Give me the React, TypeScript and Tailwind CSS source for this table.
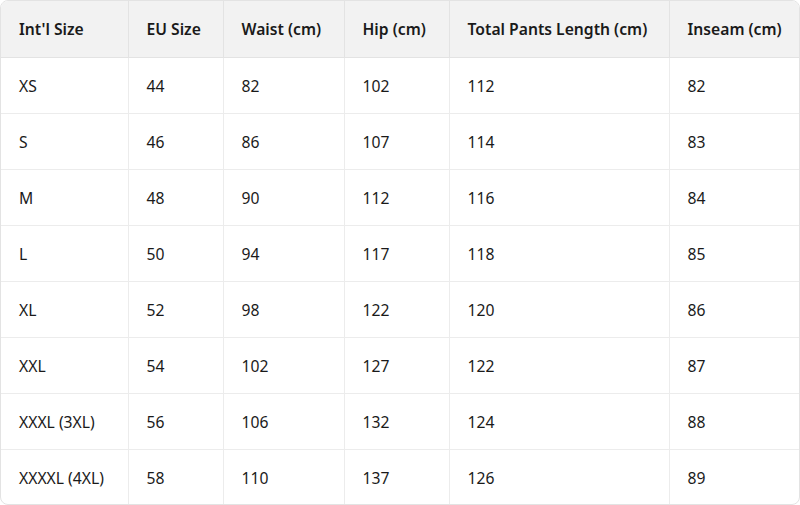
import React from "react";

const headers = ["Int'l Size", "EU Size", "Waist (cm)", "Hip (cm)", "Total Pants Length (cm)", "Inseam (cm)"];
const widths = ["w-[127px]", "w-[95px]", "w-[121px]", "w-[105px]", "w-[220px]", "w-[130px]"];
const rows = [
  ["XS", "44", "82", "102", "112", "82"],
  ["S", "46", "86", "107", "114", "83"],
  ["M", "48", "90", "112", "116", "84"],
  ["L", "50", "94", "117", "118", "85"],
  ["XL", "52", "98", "122", "120", "86"],
  ["XXL", "54", "102", "127", "122", "87"],
  ["XXXL (3XL)", "56", "106", "132", "124", "88"],
  ["XXXXL (4XL)", "58", "110", "137", "126", "89"],
];

export default function App() {
  return (
    <div className="w-[800px] h-[505px] bg-white overflow-hidden" style={{ fontFamily: "'Noto Sans', 'Open Sans', sans-serif" }}>
      <div className="rounded-[8px] border border-[#e3e3e3] overflow-hidden h-[505px]">
        <table className="w-full border-collapse table-fixed text-[15.7px] text-[#1a1a1a]">
          <colgroup>
            {widths.map((w, i) => (
              <col key={i} className={w} />
            ))}
          </colgroup>
          <thead>
            <tr className="h-[56px] bg-[#f2f2f2]">
              {headers.map((h, i) => (
                <th
                  key={i}
                  className={`text-left font-semibold whitespace-nowrap pl-[18px] pr-0 pt-[2px] border-b border-[#e3e3e3] ${i > 0 ? "border-l" : ""}`}
                >
                  {h}
                </th>
              ))}
            </tr>
          </thead>
          <tbody>
            {rows.map((r, ri) => (
              <tr key={ri} className="h-[56px]">
                {r.map((c, ci) => (
                  <td
                    key={ci}
                    className={`pl-[18px] pr-0 pt-[3px] whitespace-nowrap border-[#ececec] ${ri < rows.length - 1 ? "border-b" : ""} ${ci > 0 ? "border-l" : ""}`}
                  >
                    {c}
                  </td>
                ))}
              </tr>
            ))}
          </tbody>
        </table>
      </div>
    </div>
  );
}
